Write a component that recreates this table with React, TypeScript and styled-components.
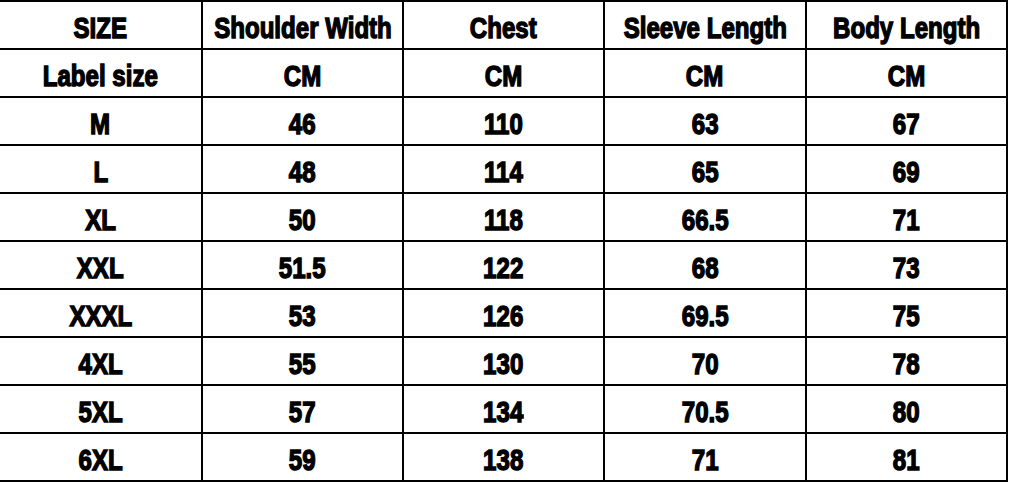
import React from "react";
import styled, { createGlobalStyle } from "styled-components";

const Global = createGlobalStyle`
  html, body { margin: 0; padding: 0; background: #ffffff; }
  body { width: 1010px; height: 482px; overflow: hidden; }
`;

const Grid = styled.div`
  display: grid;
  grid-template-columns: 203px 201px 201px 202px 201px;
  grid-auto-rows: 48px;
  border-top: 2px solid #000;
  width: 1008px;
`;

const Cell = styled.div`
  box-sizing: border-box;
  border-right: 2px solid #000;
  border-bottom: 2px solid #000;
  display: flex;
  align-items: center;
  justify-content: center;
  padding-top: 6px;
`;

const Label = styled.span`
  display: inline-block;
  font-family: "Liberation Sans", Arial, sans-serif;
  font-weight: 700;
  font-size: 29px;
  line-height: 1;
  color: #000;
  -webkit-text-stroke: 1.4px #000;
  white-space: nowrap;
  transform: scale(0.83, 1.04);
  transform-origin: center;
`;

const header = ["SIZE", "Shoulder Width", "Chest", "Sleeve Length", "Body Length"];
const rows: string[][] = [
  ["Label size", "CM", "CM", "CM", "CM"],
  ["M", "46", "110", "63", "67"],
  ["L", "48", "114", "65", "69"],
  ["XL", "50", "118", "66.5", "71"],
  ["XXL", "51.5", "122", "68", "73"],
  ["XXXL", "53", "126", "69.5", "75"],
  ["4XL", "55", "130", "70", "78"],
  ["5XL", "57", "134", "70.5", "80"],
  ["6XL", "59", "138", "71", "81"],
];

export default function App() {
  return (
    <>
      <Global />
      <Grid>
        {header.map((h, i) => (
          <Cell key={"h" + i}>
            <Label>{h}</Label>
          </Cell>
        ))}
        {rows.map((r, ri) =>
          r.map((c, ci) => (
            <Cell key={ri + "-" + ci}>
              <Label>{c}</Label>
            </Cell>
          ))
        )}
      </Grid>
    </>
  );
}
